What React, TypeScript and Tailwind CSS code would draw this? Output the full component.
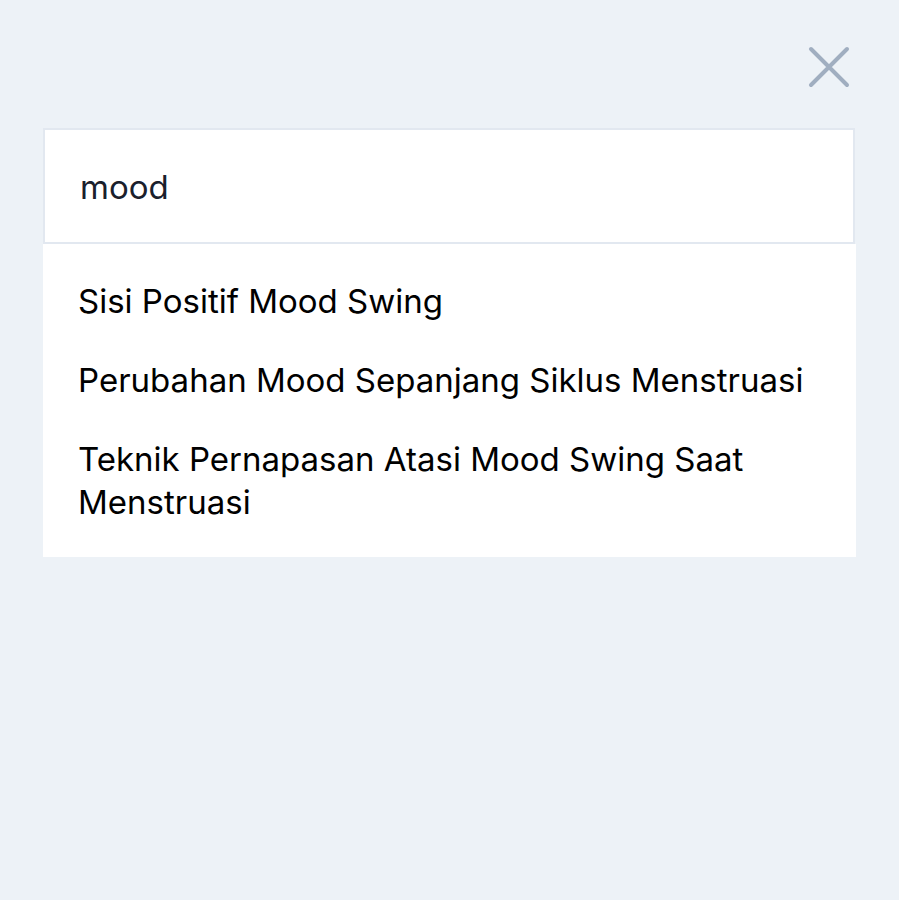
import React from "react";

export default function App() {
  const items = [
    "Sisi Positif Mood Swing",
    "Perubahan Mood Sepanjang Siklus Menstruasi",
    "Teknik Pernapasan Atasi Mood Swing Saat Menstruasi",
  ];
  return (
    <div
      className="w-[899px] h-[900px] bg-[#edf2f7] flex flex-col"
      style={{ fontFamily: "Inter, 'Noto Sans', sans-serif" }}
    >
      <div className="flex justify-end pt-[45px] pr-[48px] h-[128px]">
        <svg width="44" height="44" viewBox="0 0 44 44" fill="none">
          <path d="M4 4L40 40M40 4L4 40" stroke="#a0aec0" strokeWidth="4" strokeLinecap="round" />
        </svg>
      </div>
      <div className="mx-[43px] w-[812px] h-[116px] bg-white border-2 border-[#e2e8f0] flex items-center pl-[35px] pt-[3px] text-[33px] text-[#1a202c]">
        mood
      </div>
      <div className="mx-[43px] w-[813px] bg-white pt-[18px] pb-[15px]">
        {items.map((t) => (
          <div key={t} className="pl-[35px] pr-[30px] py-[18px] text-[33px] leading-[43px] text-black">
            {t}
          </div>
        ))}
      </div>
    </div>
  );
}
